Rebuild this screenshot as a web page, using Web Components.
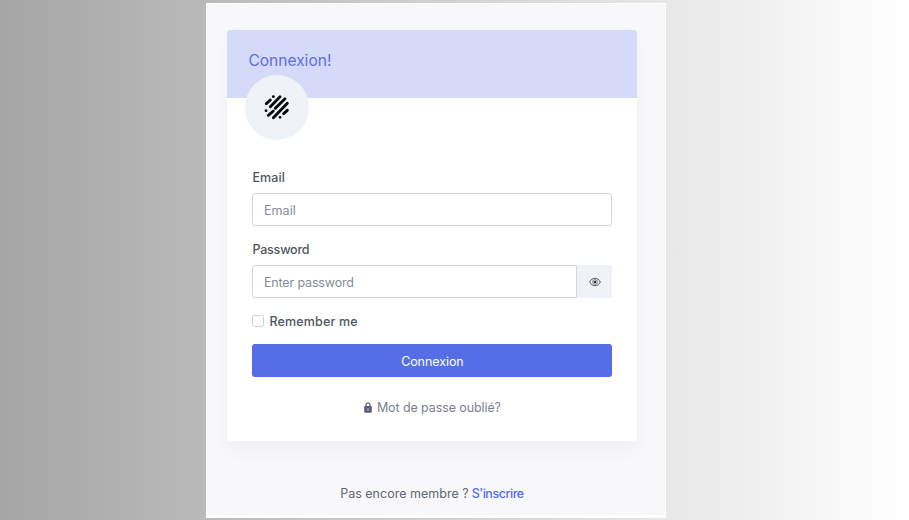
<!DOCTYPE html>
<html lang="fr">
<head>
<meta charset="utf-8">
<title>Connexion</title>
<style>
html,body{height:100%}
body{margin:0;overflow:hidden;font-family:Inter,"Open Sans",sans-serif;color:#50565d;background:linear-gradient(90deg,#a5a5a5 0%,#fff 100%)}
</style>
</head>
<body>
<login-page></login-page>
<script>
const define = (name, markup, setup) => {
  const template = document.createElement('template');
  template.innerHTML = markup;
  customElements.define(name, class extends HTMLElement {
    connectedCallback() {
      if (this.shadowRoot) return;
      this.attachShadow({mode: 'open'}).append(template.content.cloneNode(true));
      if (setup) setup(this, this.shadowRoot);
    }
  });
};

/* A single line of text tracked to fill the width given in its "width" attribute. */
define('text-run', `<style>
:host{display:block;line-height:22px;height:20px}
span{display:inline-block;white-space:pre}
</style><span><slot></slot></span>`, (host, root) => {
  const span = root.querySelector('span');
  const target = parseFloat(host.getAttribute('width'));
  const count = host.textContent.length;
  host.style.width = target + 'px';
  span.style.letterSpacing = (target - span.getBoundingClientRect().width) / count + 'px';
});

define('brand-mark', `
<style>
:host{display:grid;place-items:center;width:64.5px;height:64.5px;border-radius:50%;background:#eff2f7}
svg{display:block;width:26px;height:26px}
</style>
<svg viewBox="-38 -39 78 78" fill="none" stroke="#08090b" stroke-width="8.6" stroke-linecap="round">
<path d="M-31-10L-19-21M-10-31h.1M-19-1L10-31M-32 11h.1M-4 4L25-25M-25 25L-10 12M-10 32L32-11M10 31h.1M21 20L32 10"/>
</svg>`);

define('card-header', `
<style>
:host{display:flex;flex-direction:column;height:68px;background:#d4daf8;border-radius:3px 3px 0 0;box-sizing:border-box;padding:20px 0 0 21px;color:#5b70e0;font-size:15.5px;font-weight:400}
brand-mark{flex:none;margin:5px 0 0 -3.5px}
</style>
<slot></slot><brand-mark></brand-mark>`);

define('form-field', `
<style>
:host{display:block}
.label{display:flex;font-size:12.5px;font-weight:500;height:26px}
.box{display:flex;height:33px}
.input{flex:1;box-sizing:border-box;border:1px solid #d3d7dd;border-radius:3px;background:#fff;display:flex;align-items:center;padding-left:10.5px;font-size:12.5px;color:#868c98}
:host([joined]) .input{border-radius:3px 0 0 3px}
</style>
<div class="label"><slot name="label"></slot></div>
<div class="box"><div class="input"><slot></slot></div><slot name="end"></slot></div>`);

define('eye-button', `
<style>
:host{display:grid;place-items:center;width:35px;background:#eff2f7;border-radius:0 3px 3px 0}
svg{display:block;width:12px;height:10px}
</style>
<svg viewBox="0 0 12 10" fill="none" stroke="#51565c" stroke-width="1">
<path d="M.7 5C1.8 2.6 3.7 1.3 6 1.3S10.2 2.6 11.3 5C10.2 7.4 8.3 8.7 6 8.7S1.8 7.4.7 5z"/><circle cx="6" cy="5" r="2.4" stroke-width=".7"/><circle cx="6" cy="5" r="1.3" fill="#2d3136" stroke="none"/>
</svg>`);

define('check-row', `
<style>
:host{display:flex;align-items:center;height:20px;font-size:12.5px;font-weight:500}
i{width:12px;height:12px;box-sizing:border-box;border:1px solid #cdd1d7;border-radius:2.5px;background:#fff;margin-right:5px}
</style><i></i><slot></slot>`);

define('primary-button', `
<style>
:host{display:flex;align-items:center;justify-content:center;height:33px;border-radius:3px;background:#556ee6;color:#fff;font-size:12.5px;font-weight:400}
</style><slot></slot>`);

define('forgot-link', `
<style>
:host{display:flex;align-items:center;justify-content:center;gap:5px;height:20px;font-size:12.5px;color:#7c8092}
svg{display:block;width:8px;height:11px}
</style>
<svg viewBox="0 0 8 11"><path d="M2 5V2.8a2 2 0 0 1 4 0V5" fill="none" stroke="#5c6078" stroke-width="1.2"/><rect x=".2" y="4" width="7.6" height="6.8" rx="1" fill="#5c6078"/><path d="M4 6.5v1.9" stroke="#d9dbe3" stroke-width="1.2"/></svg>
<slot></slot>`);

define('login-card', `
<style>
:host{display:flex;flex-direction:column;width:410px;height:411px;border-radius:3px;background:#fff;box-shadow:0 10px 20px rgba(18,38,63,.035)}
.body{padding:69px 25px 0;display:flex;flex-direction:column}
form-field + form-field{margin-top:13px}
check-row{margin-top:13px}
primary-button{margin-top:13px}
forgot-link{margin-top:20px}
</style>
<card-header><text-run width="83">Connexion!</text-run></card-header>
<div class="body">
<form-field><text-run slot="label" width="32.5">Email</text-run><text-run width="32">Email</text-run></form-field>
<form-field joined><text-run slot="label" width="57">Password</text-run><text-run width="90">Enter password</text-run><eye-button slot="end"></eye-button></form-field>
<check-row><text-run width="88.5">Remember me</text-run></check-row>
<primary-button><text-run width="62.5">Connexion</text-run></primary-button>
<forgot-link><text-run width="124">Mot de passe oublié?</text-run></forgot-link>
</div>`);

define('sign-up', `
<style>
:host{display:flex;justify-content:center;gap:3px;height:20px;font-size:12.5px;color:#62676e}
.link{color:#556ee6;font-weight:500}
</style>
<text-run width="128.5">Pas encore membre ?</text-run><text-run class="link" width="52">S'inscrire</text-run>`);

define('login-page', `
<style>
:host{display:block;height:520px;padding:3px 0 0 206px;box-sizing:border-box}
main{width:460px;height:515px;box-sizing:border-box;background:#f8f8fb;border:1px solid #fff;border-bottom-width:3px;padding:26px 0 0 20.4px}
sign-up{width:409px;margin-top:42px}
</style>
<main><login-card></login-card><sign-up></sign-up></main>`);
</script>
</body>
</html>
